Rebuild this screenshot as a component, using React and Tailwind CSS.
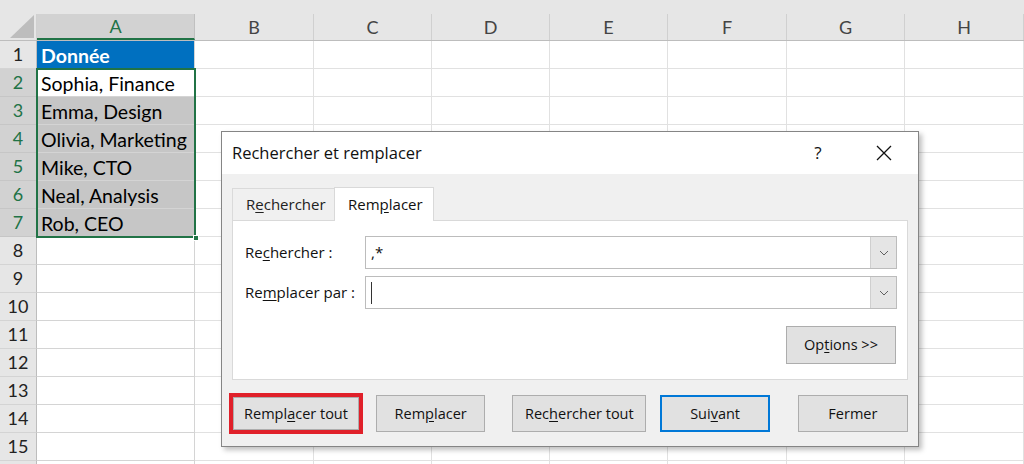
import React from 'react';

const cellFont = { fontFamily: 'Lato, "Open Sans", sans-serif' };
const uiFont = { fontFamily: '"Open Sans", "Noto Sans", sans-serif' };

const columns = ['B', 'C', 'D', 'E', 'F', 'G', 'H'];
const colWidths = ['w-[119px]', 'w-[118px]', 'w-[118px]', 'w-[118px]', 'w-[119px]', 'w-[118px]', 'w-[119px]'];

const values = {
  1: 'Donnée',
  2: 'Sophia, Finance',
  3: 'Emma, Design',
  4: 'Olivia, Marketing',
  5: 'Mike, CTO',
  6: 'Neal, Analysis',
  7: 'Rob, CEO',
};

function Sheet() {
  const rows = Array.from({ length: 16 }, (_, i) => i + 1);

  return (
    <div className="flex flex-col" style={cellFont}>
      {/* strip above the headers */}
      <div className="h-[14px] bg-[#e6e6e6]" />

      {/* column headers */}
      <div className="flex h-[27px] bg-[#e6e6e6] border-b border-[#bdbdbd]">
        <div className="w-[37px] shrink-0 flex items-end justify-end pr-[2px] pb-[2px] border-r border-[#d0d0d0]">
          <svg width="24" height="23" viewBox="0 0 24 23">
            <polygon points="24,0 24,23 0,23" fill="#bdbdbd" />
          </svg>
        </div>
        <div className="w-[158px] shrink-0 flex items-center justify-center bg-[#d2d2d2] text-[#217346] text-[18px] border-r border-[#c0c0c0] border-b-2 border-b-[#217346]">
          A
        </div>
        {columns.map((c, i) => (
          <div
            key={c}
            className={`${colWidths[i]} shrink-0 flex items-center justify-center text-[#444] text-[18px] border-r border-[#d0d0d0]`}
          >
            {c}
          </div>
        ))}
      </div>

      {/* rows */}
      {rows.map((r) => {
        const selected = r >= 2 && r <= 7;
        let cellClass = 'bg-white text-black';
        if (r === 1) cellClass = 'bg-[#0070c0] text-white font-bold';
        else if (r >= 3 && r <= 7) cellClass = 'bg-[#c6c6c6] text-black';
        return (
          <div key={r} className="flex h-[28px] shrink-0">
            <div
              className={`w-[37px] shrink-0 flex items-center justify-center text-[18px] border-b border-r ${
                selected
                  ? 'bg-[#d2d2d2] text-[#217346] border-b-[#c6c6c6] border-r-[#217346]'
                  : 'bg-[#e6e6e6] text-[#222] border-b-[#d4d4d4] border-r-[#bdbdbd]'
              }`}
            >
              {r <= 15 ? r : ''}
            </div>
            <div
              className={`w-[158px] shrink-0 flex items-center pl-[4px] pt-[2px] text-[19.5px] border-b border-r border-[#d4d4d4] whitespace-nowrap overflow-hidden ${cellClass}`}
            >
              {values[r] || ''}
            </div>
            {columns.map((c, i) => (
              <div key={c} className={`${colWidths[i]} shrink-0 border-b border-r border-[#e1e1e1] bg-white`} />
            ))}
          </div>
        );
      })}
    </div>
  );
}

function Chevron() {
  return (
    <svg width="10" height="6" viewBox="0 0 10 6" fill="none">
      <path d="M1 1l4 4 4-4" stroke="#606060" strokeWidth="1" />
    </svg>
  );
}

function ComboBox({ children }) {
  return (
    <div className="flex h-[33px] w-[532px] border border-[#bcbcbc] bg-white">
      <div className="flex-1 flex items-center pl-[5px] text-[15px] text-[#111]">{children}</div>
      <div className="w-[26px] flex items-center justify-center bg-[#e5e5e5] border-l border-[#cfcfcf]">
        <Chevron />
      </div>
    </div>
  );
}

function Btn({ children, className = '' }) {
  return (
    <div
      className={`flex items-center justify-center bg-[#e1e1e1] border text-[14.5px] text-[#111] ${className}`}
    >
      {children}
    </div>
  );
}

function Dialog() {
  return (
    <div
      className="absolute left-[221px] top-[131px] w-[698px] h-[316px] border border-[#858585] bg-[#f0f0f0] shadow-[3px_3px_5px_rgba(0,0,0,0.25)] flex flex-col"
      style={uiFont}
    >
      {/* title bar */}
      <div className="h-[42px] bg-white flex items-center pl-[10px] text-[16.5px] text-[#111]">
        <span className="flex-1">Rechercher et remplacer</span>
        <span className="w-[20px] text-center text-[17px] mr-[48px]">?</span>
        <svg width="16" height="16" viewBox="0 0 16 16" className="mr-[26px]">
          <path d="M1 1L15 15M15 1L1 15" stroke="#111" strokeWidth="1.3" />
        </svg>
      </div>

      <div className="flex-1 flex flex-col px-[10px] pt-[12px]">
        {/* tabs */}
        <div className="flex h-[34px] items-end">
          <div className="w-[102px] h-[32px] flex items-center pl-[13px] text-[15px] text-[#222] border-t border-l border-[#dadada]">
            R<span className="underline underline-offset-2">e</span>chercher
          </div>
          <div className="w-[100px] h-[34px] flex items-center pl-[13px] text-[15px] text-[#111] bg-white border-t border-l border-r border-[#d9d9d9] -mb-px relative z-10">
            Rem<span className="underline underline-offset-2">p</span>lacer
          </div>
        </div>

        {/* tab panel */}
        <div className="h-[160px] bg-white border border-[#d9d9d9] flex flex-col pl-[12px] pr-[10px] pt-[15px]">
          <div className="flex items-center">
            <span className="w-[120px] text-[15px] text-[#111]">
              Re<span className="underline underline-offset-2">c</span>hercher :
            </span>
            <ComboBox>,*</ComboBox>
          </div>
          <div className="flex items-center mt-[7px]">
            <span className="w-[120px] text-[15px] text-[#111]">
              Re<span className="underline underline-offset-2">m</span>placer par :
            </span>
            <ComboBox>
              <span className="w-px h-[22px] bg-[#333]" />
            </ComboBox>
          </div>
          <div className="flex justify-end mt-[17px] pr-px">
            <Btn className="w-[110px] h-[38px] border-[#adadad]">
              Op<span className="underline underline-offset-2">t</span>ions &gt;&gt;
            </Btn>
          </div>
        </div>

        {/* buttons */}
        <div className="flex items-center mt-[13px] -ml-[3px]">
          <div className="border-[4px] border-[#e0202a]">
            <Btn className="w-[126px] h-[33px] border-[#adadad]">
              Rempl<span className="underline underline-offset-2">a</span>cer tout
            </Btn>
          </div>
          <Btn className="w-[110px] h-[37px] ml-[13px] border-[#adadad]">
            Rem<span className="underline underline-offset-2">p</span>lacer
          </Btn>
          <Btn className="w-[135px] h-[37px] ml-[27px] border-[#adadad]">
            Rec<span className="underline underline-offset-2">h</span>ercher tout
          </Btn>
          <Btn className="w-[110px] h-[37px] ml-[14px] border-2 border-[#0078d7]">
            Sui<span className="underline underline-offset-2">v</span>ant
          </Btn>
          <Btn className="w-[111px] h-[37px] ml-[28px] border-[#adadad]">Fermer</Btn>
        </div>
      </div>
    </div>
  );
}

export default function App() {
  return (
    <div className="relative w-[1024px] h-[464px] overflow-hidden bg-white">
      <Sheet />
      {/* selection outline around A2:A7 */}
      <div className="absolute left-[36px] top-[68px] w-[160px] h-[170px] border-2 border-[#217346] pointer-events-none" />
      <div className="absolute left-[193px] top-[235px] w-[6px] h-[6px] bg-[#217346] border border-white" />
      <Dialog />
    </div>
  );
}
